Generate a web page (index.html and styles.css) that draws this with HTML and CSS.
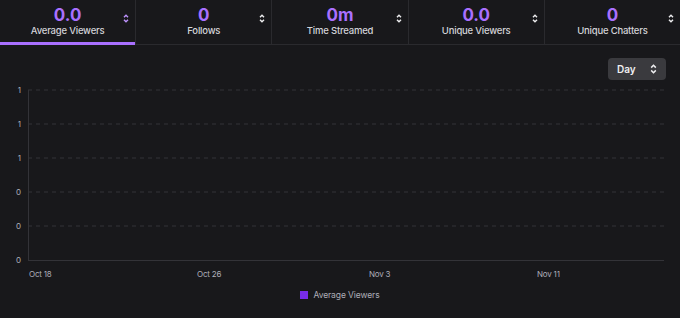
FILE: index.html
```html
<!DOCTYPE html>
<html lang="en">
<head>
  <meta charset="UTF-8" />
  <title>Stream Summary</title>
  <link rel="stylesheet" href="styles.css">
</head>
<body>

<nav class="tabs">
  <div class="tab active">
    <div class="tab-text">
      <div class="value">0.0</div>
      <div class="label">Average Viewers</div>
    </div>
    <svg class="sort" width="6" height="9" viewBox="0 0 6 9"><path d="M1 3.2 3 1.2 5 3.2M1 5.8 3 7.8 5 5.8" fill="none" stroke="currentColor" stroke-width="1.4"/></svg>
  </div>
  <div class="tab">
    <div class="tab-text">
      <div class="value">0</div>
      <div class="label">Follows</div>
    </div>
    <svg class="sort" width="6" height="9" viewBox="0 0 6 9"><path d="M1 3.2 3 1.2 5 3.2M1 5.8 3 7.8 5 5.8" fill="none" stroke="currentColor" stroke-width="1.4"/></svg>
  </div>
  <div class="tab">
    <div class="tab-text">
      <div class="value">0m</div>
      <div class="label">Time Streamed</div>
    </div>
    <svg class="sort" width="6" height="9" viewBox="0 0 6 9"><path d="M1 3.2 3 1.2 5 3.2M1 5.8 3 7.8 5 5.8" fill="none" stroke="currentColor" stroke-width="1.4"/></svg>
  </div>
  <div class="tab">
    <div class="tab-text">
      <div class="value">0.0</div>
      <div class="label">Unique Viewers</div>
    </div>
    <svg class="sort" width="6" height="9" viewBox="0 0 6 9"><path d="M1 3.2 3 1.2 5 3.2M1 5.8 3 7.8 5 5.8" fill="none" stroke="currentColor" stroke-width="1.4"/></svg>
  </div>
  <div class="tab">
    <div class="tab-text">
      <div class="value">0</div>
      <div class="label">Unique Chatters</div>
    </div>
    <svg class="sort" width="6" height="9" viewBox="0 0 6 9"><path d="M1 3.2 3 1.2 5 3.2M1 5.8 3 7.8 5 5.8" fill="none" stroke="currentColor" stroke-width="1.4"/></svg>
  </div>
</nav>

<div class="toolbar">
  <button class="select">
    <span>Day</span>
    <svg width="7" height="10" viewBox="0 0 7 10"><path d="M1.2 3.6 3.5 1.3 5.8 3.6M1.2 6.4 3.5 8.7 5.8 6.4" fill="none" stroke="currentColor" stroke-width="1.5"/></svg>
  </button>
</div>

<svg class="chart" width="680" height="200" viewBox="0 0 680 200">
  <g class="grid">
    <line x1="28" y1="6" x2="664" y2="6"/>
    <line x1="28" y1="40" x2="664" y2="40"/>
    <line x1="28" y1="74" x2="664" y2="74"/>
    <line x1="28" y1="108" x2="664" y2="108"/>
    <line x1="28" y1="142" x2="664" y2="142"/>
  </g>
  <g class="axis">
    <line x1="28.5" y1="6" x2="28.5" y2="176"/>
    <line x1="28" y1="176.5" x2="664" y2="176.5"/>
  </g>
  <g class="ylabels">
    <text x="21" y="9">1</text>
    <text x="21" y="43">1</text>
    <text x="21" y="77">1</text>
    <text x="21" y="111">0</text>
    <text x="21" y="145">0</text>
    <text x="21" y="179">0</text>
  </g>
  <g class="xlabels">
    <text x="29" y="193">Oct 18</text>
    <text x="197" y="193">Oct 26</text>
    <text x="369" y="193">Nov 3</text>
    <text x="537" y="193">Nov 11</text>
  </g>
</svg>

<div class="legend">
  <span class="swatch"></span>
  <span>Average Viewers</span>
</div>

</body>
</html>
```

FILE: styles.css
```css
body {
  margin: 0;
  font-family: Inter, 'Noto Sans', sans-serif;
  background: #18181b;
  color: #efeff1;
  overflow: hidden;
}

/* Metric tabs */
.tabs {
  display: flex;
  height: 44px;
  border-bottom: 1px solid #2a2a2e;
}

.tab {
  flex: 1;
  position: relative;
  display: flex;
  align-items: center;
  justify-content: center;
  border-right: 1px solid #2a2a2e;
}

.tab:last-child {
  border-right: none;
}

.tab-text {
  text-align: center;
  margin-top: -3px;
}

.value {
  color: #a970ff;
  font-size: 17px;
  font-weight: 700;
  line-height: 20px;
}

.label {
  color: #d3d3d8;
  font-size: 9.5px;
  font-weight: 500;
  letter-spacing: -0.2px;
  line-height: 12px;
}

.sort {
  position: absolute;
  right: 6px;
  top: 14px;
  color: #efeff1;
}

.tab.active .sort {
  color: #bf94ff;
}

.tab.active::after {
  content: "";
  position: absolute;
  left: 0;
  right: 0;
  bottom: -1px;
  height: 3px;
  background: #a970ff;
}

/* Toolbar */
.toolbar {
  display: flex;
  justify-content: flex-end;
  padding: 13px 14px 0 0;
}

.select {
  display: flex;
  align-items: center;
  justify-content: space-between;
  width: 58px;
  height: 22px;
  padding: 0 9px;
  border: none;
  border-radius: 4px;
  background: #3a3a3e;
  color: #efeff1;
  font-family: inherit;
  font-size: 10px;
  font-weight: 600;
}

/* Chart */
.chart {
  display: block;
  margin-top: 4px;
}

.grid line {
  stroke: #333338;
  stroke-width: 1;
  stroke-dasharray: 4 4;
}

.axis line {
  stroke: #333338;
  stroke-width: 1;
}

.ylabels text {
  fill: #adadb8;
  font-size: 8px;
  text-anchor: end;
}

.xlabels text {
  fill: #adadb8;
  font-size: 8px;
  letter-spacing: -0.2px;
}

.legend {
  display: flex;
  align-items: center;
  justify-content: center;
  gap: 5px;
  margin-top: 6px;
  color: #adadb8;
  font-size: 8.5px;
  letter-spacing: -0.1px;
}

.swatch {
  width: 8px;
  height: 8px;
  background: #772ce8;
}
```
